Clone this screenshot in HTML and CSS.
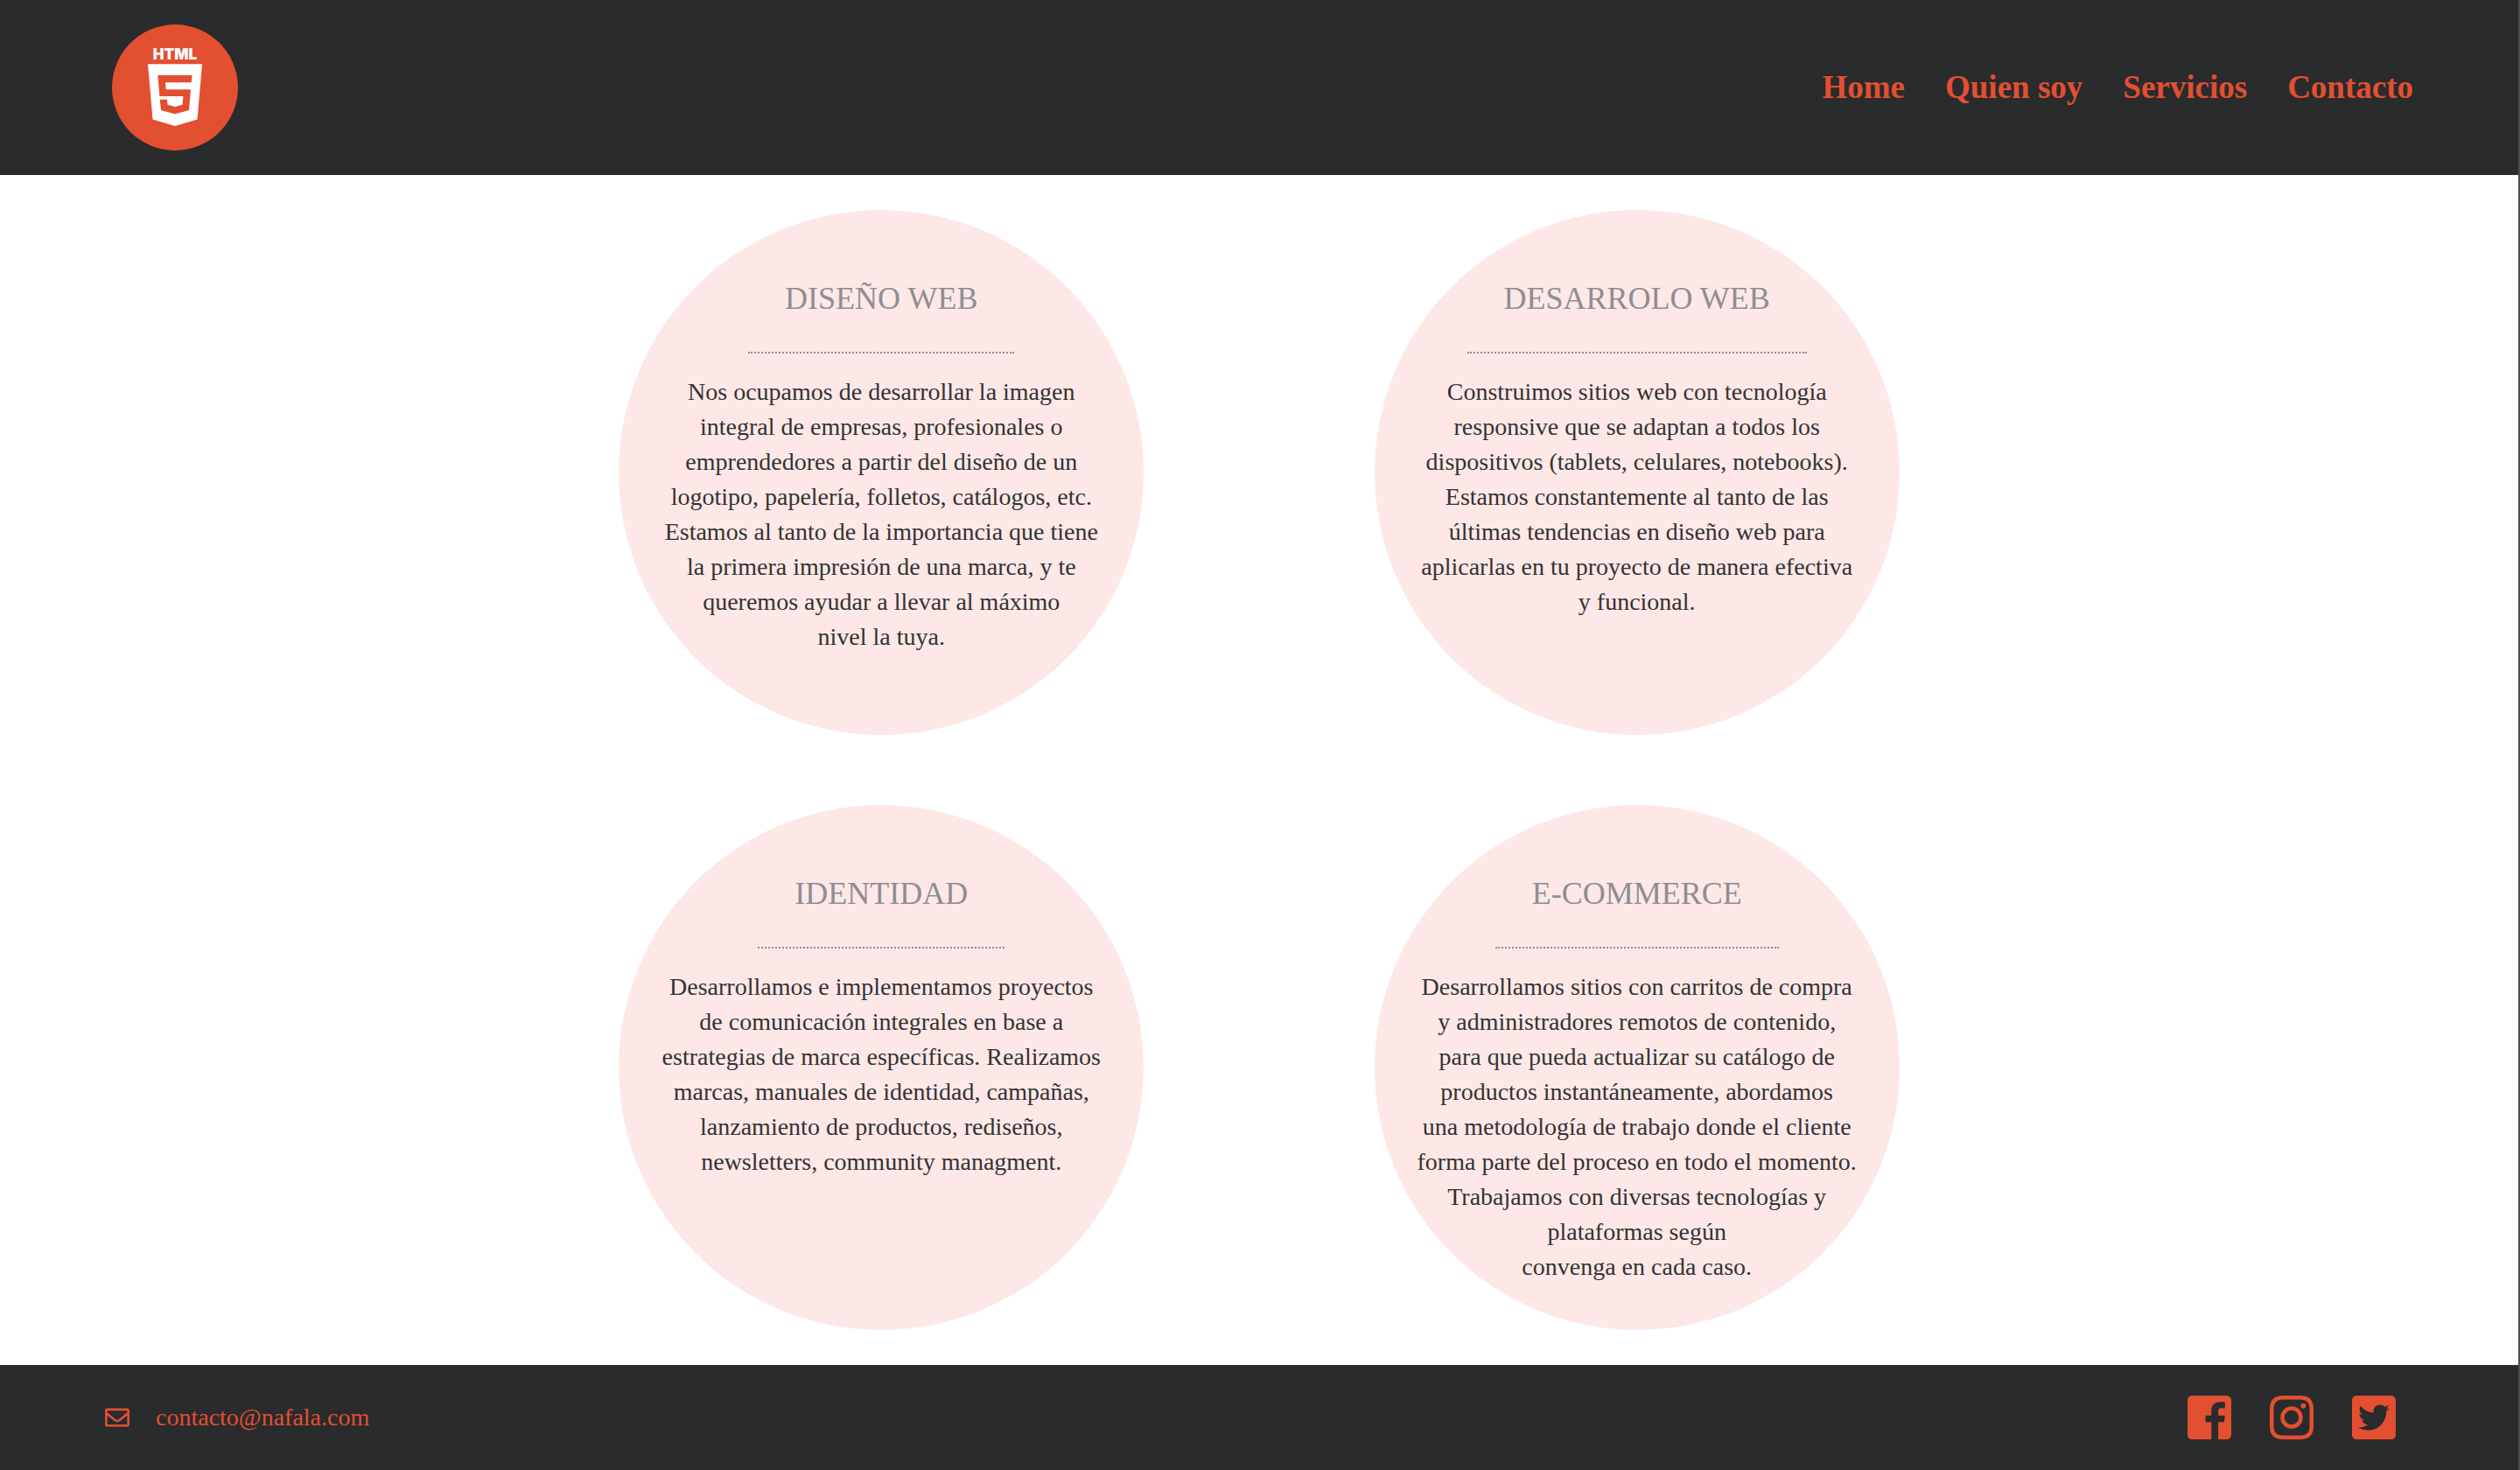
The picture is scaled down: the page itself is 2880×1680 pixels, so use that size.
FILE: index.html
```html
<!DOCTYPE html>
<html lang="es">
<head>
<meta charset="utf-8">
<title>Servicios</title>
<link rel="stylesheet" href="styles.css">
</head>
<body>
<header class="header">
  <a class="logo" href="#" aria-label="HTML5">
    <svg viewBox="0 0 144 144" width="144" height="144">
      <circle cx="72" cy="72" r="72" fill="#e34f31"/>
      <text class="logo-text" x="72" y="40" text-anchor="middle">HTML</text>
      <path fill="#fff" d="M41 45.300h62l-5.500 63.200L72 116l-25.500-7.500z"/>
      <path fill="#e34f31" d="M52.300 58h39.200l-.7 8.300H61l.7 8H90L88 98l-16 4.200L56 98l-1.300-12.200H63l.5 6L72 94l8.500-2.200.9-9.800H54.400z"/>
    </svg>
  </a>
  <nav class="nav">
    <a href="#">Home</a>
    <a href="#">Quien soy</a>
    <a href="#">Servicios</a>
    <a href="#">Contacto</a>
  </nav>
</header>
<main class="services">
  <article class="service">
    <h2>DISEÑO WEB</h2>
    <p>Nos ocupamos de desarrollar la imagen<br>integral de empresas, profesionales o<br>emprendedores a partir del diseño de un<br>logotipo, papelería, folletos, catálogos, etc.<br>Estamos al tanto de la importancia que tiene<br>la primera impresión de una marca, y te<br>queremos ayudar a llevar al máximo<br>nivel la tuya.</p>
  </article>
  <article class="service">
    <h2>DESARROLO WEB</h2>
    <p>Construimos sitios web con tecnología<br>responsive que se adaptan a todos los<br>dispositivos (tablets, celulares, notebooks).<br>Estamos constantemente al tanto de las<br>últimas tendencias en diseño web para<br>aplicarlas en tu proyecto de manera efectiva<br>y funcional.</p>
  </article>
  <article class="service">
    <h2>IDENTIDAD</h2>
    <p>Desarrollamos e implementamos proyectos<br>de comunicación integrales en base a<br>estrategias de marca específicas. Realizamos<br>marcas, manuales de identidad, campañas,<br>lanzamiento de productos, rediseños,<br>newsletters, community managment.</p>
  </article>
  <article class="service">
    <h2>E-COMMERCE</h2>
    <p>Desarrollamos sitios con carritos de compra<br>y administradores remotos de contenido,<br>para que pueda actualizar su catálogo de<br>productos instantáneamente, abordamos<br>una metodología de trabajo donde el cliente<br>forma parte del proceso en todo el momento.<br>Trabajamos con diversas tecnologías y<br>plataformas según<br>convenga en cada caso.</p>
  </article>
</main>
<footer class="footer">
  <a class="mail" href="mailto:contacto@nafala.com">
    <svg viewBox="0 0 512 512" width="28" height="28" fill="currentColor" aria-hidden="true"><path d="M464 64H48C21.490 64 0 85.490 0 112v288c0 26.510 21.490 48 48 48h416c26.510 0 48-21.490 48-48V112c0-26.510-21.490-48-48-48zm0 48v40.805c-22.422 18.259-58.168 46.651-134.587 106.490-16.841 13.247-50.201 45.072-73.413 44.701-23.208.375-56.579-31.459-73.413-44.701C106.180 199.465 70.425 171.067 48 152.805V112h416zM48 400V214.398c22.914 18.251 55.409 43.862 104.938 82.646 21.857 17.205 60.134 55.186 103.062 54.955 42.717.231 80.509-37.199 103.053-54.947 49.528-38.783 82.032-64.401 104.947-82.653V400H48z"/></svg>
    <span>contacto@nafala.com</span>
  </a>
  <div class="social">
    <a href="#" aria-label="Facebook"><svg viewBox="0 32 448 448" width="50" height="50" fill="currentColor"><path d="M448 80v352c0 26.500-21.500 48-48 48h-85.300V302.800h60.600l8.700-67.600h-69.300V192c0-19.600 5.400-32.900 33.500-32.900H384V98.700c-6.200-.8-27.400-2.700-52.200-2.700-51.600 0-87 31.500-87 89.400v49.900H184v67.600h60.900V480H48c-26.500 0-48-21.500-48-48V80c0-26.500 21.500-48 48-48h352c26.500 0 48 21.500 48 48z"/></svg></a>
    <a href="#" aria-label="Instagram"><svg viewBox="0 0 50 50" width="50" height="50" fill="none" stroke="currentColor"><path stroke-width="4.500" d="M15 2.250h20q12.750 0 12.750 12.750v20q0 12.750-12.750 12.750H15Q2.250 47.750 2.250 35V15Q2.250 2.250 15 2.250z"/><circle cx="25" cy="25" r="10.500" stroke-width="4.500"/><circle cx="38.400" cy="11.700" r="3" fill="currentColor" stroke="none"/></svg></a>
    <a href="#" aria-label="Twitter"><svg viewBox="0 32 448 448" width="50" height="50" fill="currentColor"><path d="M400 32H48C21.500 32 0 53.500 0 80v352c0 26.500 21.500 48 48 48h352c26.500 0 48-21.500 48-48V80c0-26.500-21.500-48-48-48zm-48.900 158.800c.2 2.800.2 5.700.2 8.500 0 86.700-66 186.600-186.600 186.600-37.200 0-71.700-10.800-100.700-29.400 5.300.6 10.400.8 15.800.8 30.700 0 58.900-10.400 81.400-28-28.800-.6-53-19.500-61.300-45.500 10.100 1.500 19.200 1.500 29.600-1.200-30-6.100-52.500-32.500-52.500-64.400v-.8c8.700 4.900 18.900 7.900 29.600 8.300a65.447 65.447 0 0 1-29.200-54.600c0-12.200 3.200-23.400 8.900-33.100 32.300 39.800 80.800 65.800 135.200 68.600-9.300-44.500 24-80.600 64-80.600 18.900 0 35.900 7.900 47.900 20.700 14.800-2.800 29-8.300 41.600-15.800-4.900 15.200-15.200 28-28.800 36.100 13.200-1.400 26-5.100 37.800-10.200-8.900 13.100-20.100 24.700-32.900 34z"/></svg></a>
  </div>
</footer>
</body>
</html>
```
FILE: styles.css
```css
* {
  box-sizing: border-box;
}

body {
  margin: 0;
  background: #fff;
  border-right: 2px solid #4d4d4f;
  color: #333;
  font-family: "Liberation Serif", serif;
  font-size: 28px;
  line-height: 40px;
}

a {
  color: #e34f31;
  text-decoration: none;
}

svg {
  display: block;
}

.header {
  display: flex;
  align-items: center;
  justify-content: space-between;
  padding: 28px 120px 28px 128px;
  background: #292b2c;
}

.logo-text {
  fill: #fff;
  font-family: Inter, sans-serif;
  font-size: 17px;
  font-weight: 900;
}

.nav {
  display: flex;
  gap: 46px;
  font-size: 37px;
  font-weight: 700;
}

.services {
  display: grid;
  grid-template-columns: 1fr 1fr;
  justify-items: center;
  width: 60%;
  margin: 0 auto;
}

.service {
  display: flex;
  flex-direction: column;
  align-items: center;
  width: 600px;
  height: 600px;
  margin: 40px 0;
  padding-top: 60px;
  border-radius: 50%;
  background: #fde8e7;
  text-align: center;
  white-space: nowrap;
}

.service h2 {
  margin: 0;
  padding: 0 42px 20px;
  border-bottom: 2px dotted #8f8d92;
  color: #8f8d92;
  font-family: "Liberation Serif", serif;
  font-size: 36px;
  font-weight: 400;
  line-height: 82px;
}

.service p {
  margin: 24px 0 0;
}

.footer {
  display: flex;
  align-items: center;
  justify-content: space-between;
  padding: 35px 140px 35px 120px;
  background: #292b2c;
}

.mail {
  display: flex;
  align-items: center;
  gap: 30px;
}

.social {
  display: flex;
  gap: 44px;
}
```
